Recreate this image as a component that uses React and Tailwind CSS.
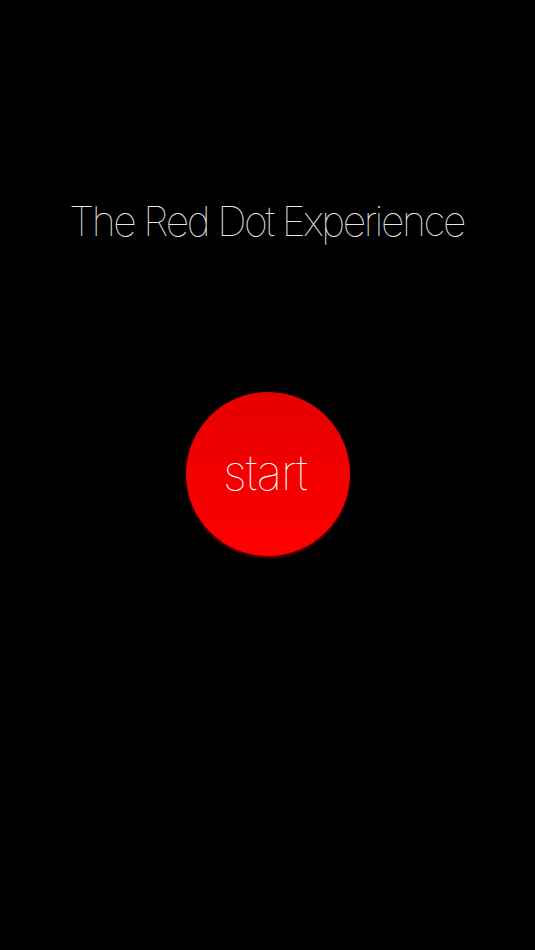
import React from 'react';

const App = () => {
  return (
    <div className="w-full min-h-[950px] bg-black flex flex-col items-center font-['Inter','Liberation_Sans',sans-serif]">
      <h1 className="mt-[196px] text-[41px] leading-[50px] font-thin text-[#e6e6e6] tracking-[-2.45px] -ml-[2px]">
        The Red Dot Experience
      </h1>
      <button className="mt-[146px] w-[164px] h-[164px] rounded-full bg-gradient-to-b from-[#e50000] to-[#ff0000] shadow-[0_2px_3px_rgba(120,0,0,0.8)] flex items-center justify-center">
        <span className="text-[48px] leading-none font-thin text-white tracking-[-1px] -mt-[2px] -ml-[5px]">start</span>
      </button>
    </div>
  );
};

export default App;
